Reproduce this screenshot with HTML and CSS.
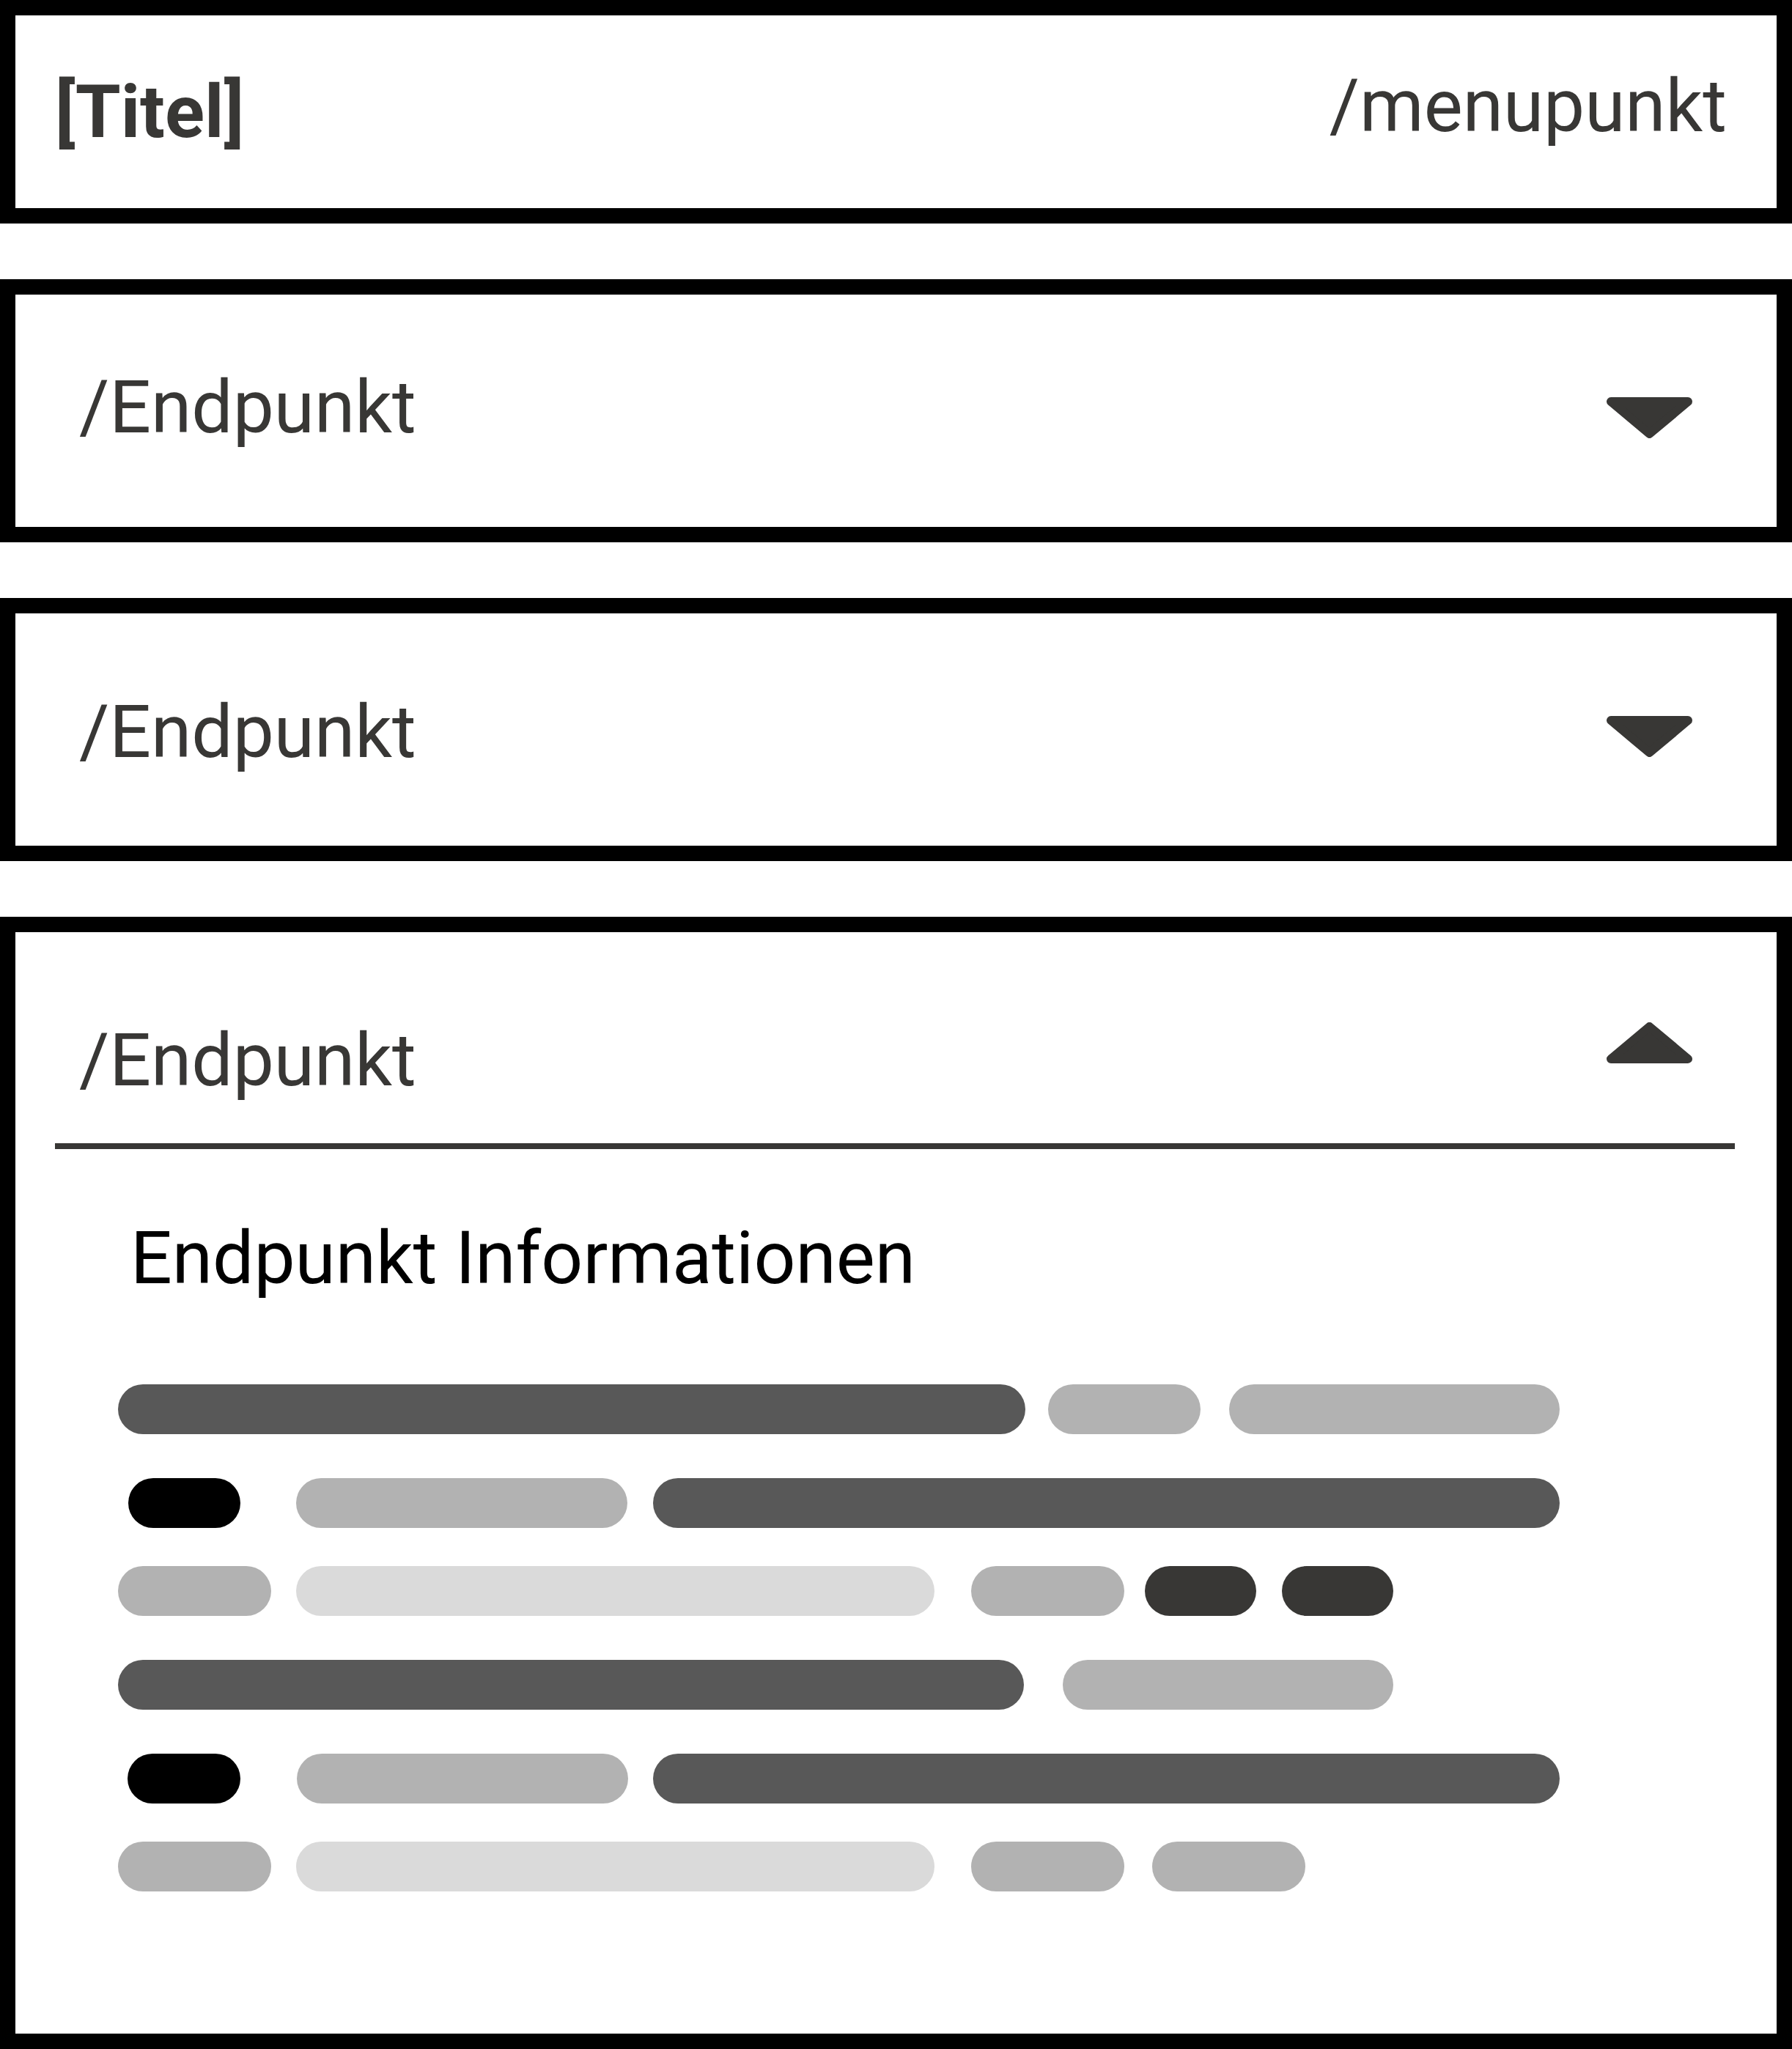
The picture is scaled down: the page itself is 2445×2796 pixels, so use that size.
FILE: index.html
```html
<!DOCTYPE html>
<html lang="de">
<head>
  <meta charset="UTF-8" />
  <title>Endpunkte</title>
  <link rel="stylesheet" href="styles.css">
</head>
<body>

<div id="page">
  <header class="panel topbar">
    <div class="title">[Titel]</div>
    <div class="menu-link">/menupunkt</div>
  </header>

  <section class="panel endpoint">
    <div class="endpoint-name">/Endpunkt</div>
    <svg class="caret" viewBox="0 0 117 56"><polygon points="6,6 111,6 58.5,50" /></svg>
  </section>

  <section class="panel endpoint low">
    <div class="endpoint-name">/Endpunkt</div>
    <svg class="caret" viewBox="0 0 117 56"><polygon points="6,6 111,6 58.5,50" /></svg>
  </section>

  <section class="panel endpoint-open">
    <div class="endpoint-head">
      <div class="endpoint-name">/Endpunkt</div>
      <svg class="caret up" viewBox="0 0 117 56"><polygon points="58.5,6 111,50 6,50" /></svg>
    </div>

    <div class="endpoint-body">
      <h2 class="info-title">Endpunkt Informationen</h2>

      <div class="skeleton">
        <div class="bar-row">
          <span class="bar dark" style="width:1238px"></span>
          <span class="bar mid" style="width:208px;margin-left:31px"></span>
          <span class="bar mid" style="width:451px;margin-left:39px"></span>
        </div>
        <div class="bar-row">
          <span class="bar black" style="width:153px;margin-left:14px"></span>
          <span class="bar mid" style="width:452px;margin-left:76px"></span>
          <span class="bar dark" style="width:1237px;margin-left:35px"></span>
        </div>
        <div class="bar-row tight">
          <span class="bar mid" style="width:209px"></span>
          <span class="bar light" style="width:871px;margin-left:34px"></span>
          <span class="bar mid" style="width:209px;margin-left:50px"></span>
          <span class="bar ink" style="width:152px;margin-left:28px"></span>
          <span class="bar ink" style="width:152px;margin-left:35px"></span>
        </div>
        <div class="bar-row">
          <span class="bar dark" style="width:1236px"></span>
          <span class="bar mid" style="width:451px;margin-left:53px"></span>
        </div>
        <div class="bar-row">
          <span class="bar black" style="width:154px;margin-left:13px"></span>
          <span class="bar mid" style="width:452px;margin-left:77px"></span>
          <span class="bar dark" style="width:1237px;margin-left:34px"></span>
        </div>
        <div class="bar-row tight">
          <span class="bar mid" style="width:209px"></span>
          <span class="bar light" style="width:871px;margin-left:34px"></span>
          <span class="bar mid" style="width:209px;margin-left:50px"></span>
          <span class="bar mid" style="width:209px;margin-left:38px"></span>
        </div>
      </div>
    </div>
  </section>
</div>

</body>
</html>
```

FILE: styles.css
```css
body {
  margin: 0;
  background: #fff;
  color: #383735;
  font-family: Roboto, "Liberation Sans", sans-serif;
  font-size: 100px;
  line-height: normal;
}

#page {
  display: flex;
  flex-direction: column;
  gap: 76px;
}

.panel {
  box-sizing: border-box;
  width: 100%;
  border: 21px solid #000;
  background: #fff;
}

/* top bar */
.topbar {
  display: flex;
  align-items: center;
  justify-content: space-between;
  height: 305px;
  padding: 0 68px 0 54px;
}

.title {
  font-weight: bold;
}

.menu-link {
  margin-bottom: 16px;
}

/* closed endpoints */
.endpoint {
  display: flex;
  align-items: center;
  justify-content: space-between;
  height: 359px;
  padding: 0 115px 0 87px;
}

.endpoint .endpoint-name {
  margin-bottom: 10px;
}

.endpoint.low .endpoint-name {
  margin-bottom: 0;
  margin-top: 6px;
}

.caret {
  display: block;
  width: 117px;
  height: 56px;
  fill: #383735;
  stroke: #383735;
  stroke-width: 12;
  stroke-linejoin: round;
}

.endpoint .caret {
  margin-top: 19px;
}

/* open endpoint */
.endpoint-open {
  padding: 0 57px 194px 54px;
}

.endpoint-head {
  display: flex;
  align-items: flex-start;
  justify-content: space-between;
  padding: 116px 58px 55px 33px;
  border-bottom: 8px solid #383735;
}

.endpoint-head .caret {
  margin-top: 7px;
}

.endpoint-body {
  padding-left: 86px;
}

.info-title {
  margin: 90px 0 114px 17px;
  font-size: 100px;
  font-weight: normal;
  color: #000;
}

.bar-row {
  display: flex;
  height: 68px;
}

.bar-row + .bar-row {
  margin-top: 60px;
}

.bar-row.tight {
  margin-top: 52px;
}

.bar {
  display: block;
  flex: none;
  height: 68px;
  border-radius: 34px;
}

.bar.dark  { background: #585858; }
.bar.mid   { background: #b2b2b2; }
.bar.light { background: #dadada; }
.bar.black { background: #000; }
.bar.ink   { background: #383735; }
```
